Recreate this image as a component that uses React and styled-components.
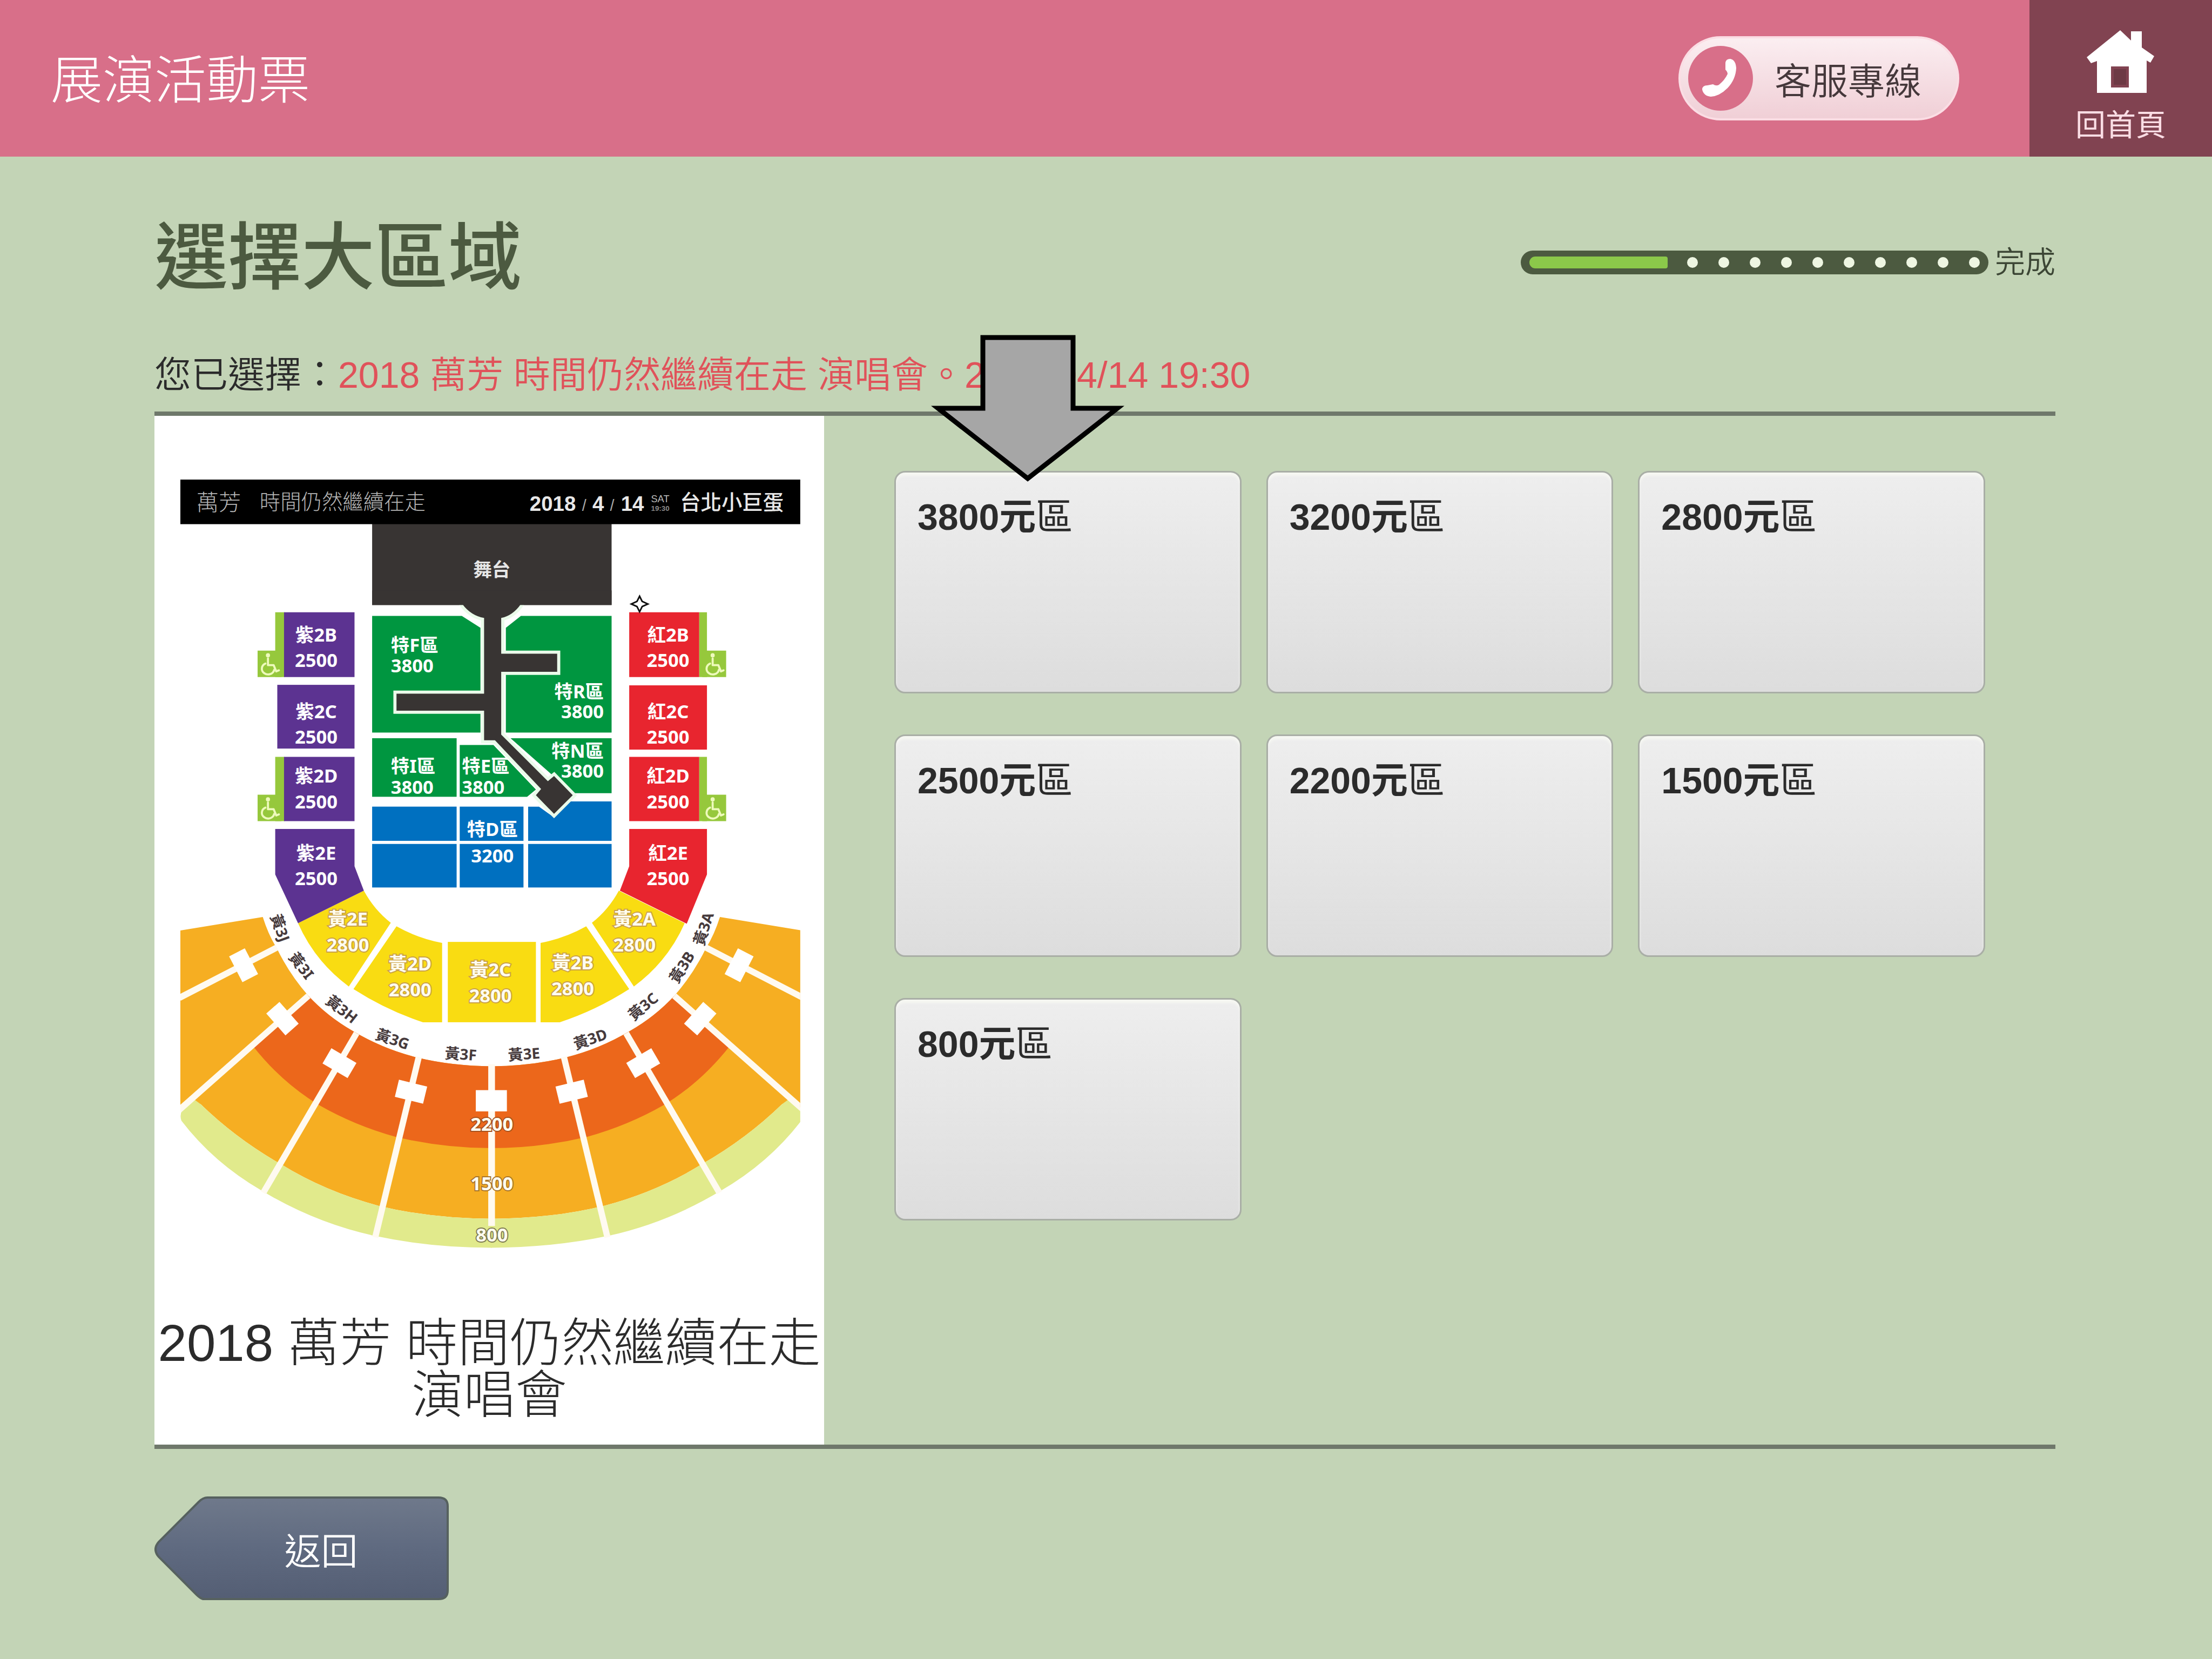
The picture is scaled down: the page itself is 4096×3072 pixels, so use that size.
import React from 'react';
import styled, { createGlobalStyle } from 'styled-components';

const GlobalStyle = createGlobalStyle`
  * {
    box-sizing: border-box;
  }
  body {
    margin: 0;
    background: #c3d4b6;
    color: #2b2b2b;
    font-family: 'Liberation Sans', 'Noto Sans CJK TC', sans-serif;
  }
  h1, h2, p, ul {
    margin: 0;
    padding: 0;
  }
  button {
    font-family: inherit;
    cursor: pointer;
  }
`;

const areas = ['3800', '3200', '2800', '2500', '2200', '1500', '800'];

const steps = Array.from({ length: 10 }, (_, i) => i);

/* ---------- seat map data ---------- */

const sideBlocks = [
  { row: '2B', y: 1239, priceY: 1287 },
  { row: '2C', y: 1386, priceY: 1435 },
  { row: '2D', y: 1511, priceY: 1561 },
  { row: '2E', y: 1659, priceY: 1708 },
];

const floorLabels = [
  { name: '特F區', price: '3800', x: 754, y: 1258, priceY: 1298 },
  { name: '特I區', price: '3800', x: 754, y: 1492, priceY: 1532 },
  { name: '特E區', price: '3800', x: 891, y: 1492, priceY: 1532 },
  { name: '特R區', price: '3800', x: 1165, y: 1348, priceY: 1387, anchor: 'end' },
  { name: '特N區', price: '3800', x: 1165, y: 1463, priceY: 1501, anchor: 'end' },
  { name: '特D區', price: '3200', x: 950, y: 1614, priceY: 1665, anchor: 'middle' },
];

const yellowLabels = [
  { name: '黃2E', x: 671, y: 1787 },
  { name: '黃2D', x: 791, y: 1873 },
  { name: '黃2C', x: 946, y: 1885 },
  { name: '黃2B', x: 1105, y: 1871 },
  { name: '黃2A', x: 1224, y: 1787 },
];

const upperLabels = [
  { name: '黃3J', x: 540, y: 1791, angle: 70 },
  { name: '黃3I', x: 581, y: 1864, angle: 52 },
  { name: '黃3H', x: 659, y: 1948, angle: 38 },
  { name: '黃3G', x: 757, y: 2006, angle: 19 },
  { name: '黃3F', x: 889, y: 2035, angle: 4 },
  { name: '黃3E', x: 1011, y: 2035, angle: -4 },
  { name: '黃3D', x: 1139, y: 2006, angle: -19 },
  { name: '黃3C', x: 1241, y: 1943, angle: -40 },
  { name: '黃3B', x: 1316, y: 1867, angle: -58 },
  { name: '黃3A', x: 1358, y: 1793, angle: -72 },
];

const aisles = [
  { x1: 534, y1: 1829, x2: 346, y2: 1926, cx: 470, cy: 1863 },
  { x1: 595, y1: 1922, x2: 346, y2: 2142, cx: 545, cy: 1966 },
  { x1: 688, y1: 1994, x2: 508, y2: 2302, cx: 655, cy: 2052 },
  { x1: 808, y1: 2040, x2: 724, y2: 2388, cx: 793, cy: 2107 },
];

/* ---------- icons ---------- */

const PhoneIcon = () => (
  <svg width="120" height="120" viewBox="0 0 120 120" aria-hidden="true">
    <circle cx="60" cy="60" r="60" fill="#d86f89" />
    <path
      d="M69 31 Q70 24 78 24 Q88 26 89 41 Q88 62 73 78 Q58 93 42 94 Q29 93 26 81 Q26 73 36 73 L46 71 Q52 75 57 72 Q68 63 73 52 Q73 48 69 44 Z"
      fill="#fff"
    />
  </svg>
);

const HomeIcon = () => (
  <svg width="126" height="116" viewBox="0 0 126 116" aria-hidden="true">
    <path
      d="M62 0 L82 19 V2 H102 V32 L125 48 L118 60 L111 56 V116 H19 V57 L8 61 L0 50 Z M45 67 V106 H78 V67 Z"
      fill="#fff"
      fillRule="evenodd"
    />
    <rect x="50" y="72" width="23" height="29" fill="#6d3a45" />
  </svg>
);

const ArrowDown = () => (
  <svg width="358" height="272" viewBox="0 0 358 272" aria-hidden="true">
    <polygon
      points="96,5 263,5 263,136 345,136 179,266 13,136 96,136"
      fill="#a6a6a6"
      stroke="#000"
      strokeWidth="9"
      strokeMiterlimit="10"
    />
  </svg>
);

const BackShape = () => (
  <svg viewBox="0 0 545 192" preserveAspectRatio="none" aria-hidden="true">
    <defs>
      <linearGradient id="backFill" x1="0" y1="0" x2="0" y2="1">
        <stop offset="0" stopColor="#6f798b" />
        <stop offset="0.5" stopColor="#5f6a80" />
        <stop offset="1" stopColor="#545e74" />
      </linearGradient>
    </defs>
    <path
      d="M98 2 H526 Q543 2 543 18 V174 Q543 190 526 190 H90 Q84 188 78 182 L8 112 Q-4 98 8 84 L82 10 Q90 2 98 2 Z"
      fill="url(#backFill)"
      stroke="#56615f"
      strokeWidth="4"
    />
  </svg>
);

/* ---------- seat map ---------- */

const Wheelchair = ({ x, y }) => (
  <g transform={`translate(${x} ${y})`}>
    <rect width="46" height="51" fill="#96c83c" />
    <g fill="none" stroke="#eefabc" strokeWidth="4" strokeLinecap="round" strokeLinejoin="round">
      <circle cx="20" cy="9" r="2" />
      <path d="M20 15 V28 H31 L36 40 L41 38" />
      <path d="M15 25 A12 11 0 1 0 32 37" />
    </g>
  </g>
);

// one half of the stands, the other half is the same thing mirrored
const HalfStand = () => (
  <g>
    <path
      d="M348 1796 L507 1770 Q518 1805 534 1830 Q558 1880 595 1922 Q632 1962 681 1990 Q740 2025 805 2041 Q870 2057 949 2058 V2352 Q832 2352 730 2327 Q628 2300 542 2247 Q456 2198 387 2131 L348 2138 Z"
      fill="#f6ae22"
    />
    <path
      d="M595 1922 Q632 1962 681 1990 Q740 2025 805 2041 Q870 2057 949 2058 V2216 Q855 2216 763 2194 Q684 2172 616 2133 Q544 2090 488 2019 Z"
      fill="#ec671b"
    />
    <path
      d="M375 2122 L387 2131 Q456 2198 542 2247 Q628 2300 730 2327 Q832 2352 949 2352 V2408 Q830 2408 722 2385 Q608 2360 505 2298 Q412 2244 350 2163 Q346 2152 352 2142 Z"
      fill="#e1ea8c"
    />
    <path d="M702 1719 L575 1782 Q607 1855 673 1904 L754 1781 Q722 1756 702 1719 Z" fill="#f9dc12" />
    <path d="M765 1788 Q806 1811 853 1820 V1973 H816 Q746 1950 682 1909 Z" fill="#f9dc12" />
    {aisles.map((a) => {
      const angle = (Math.atan2(a.y2 - a.y1, a.x2 - a.x1) * 180) / Math.PI;
      return (
        <g key={a.cx} fill="#fffaf0" stroke="#fffaf0">
          <line x1={a.x1} y1={a.y1} x2={a.x2} y2={a.y2} strokeWidth="12" />
          <rect
            x="-17"
            y="-28"
            width="34"
            height="56"
            stroke="none"
            fill="#fff"
            transform={`translate(${a.cx} ${a.cy}) rotate(${angle})`}
          />
        </g>
      );
    })}
  </g>
);

const SeatMap = () => (
  <MapSvg viewBox="298 803 1292 1737" role="img" aria-label="座位圖">
    <defs>
      <clipPath id="mapEdge">
        <rect x="348" y="926" width="1196" height="1500" />
      </clipPath>
    </defs>
    <rect x="718" y="1004" width="462" height="164" fill="#383433" />
    <rect x="348" y="926" width="1196" height="86" fill="#000" />
    <BarText fill="#b5b5b5" fontWeight="300">
      <text x="379" y="985" fontSize="43">萬芳</text>
      <text x="501" y="983" fontSize="40">時間仍然繼續在走</text>
    </BarText>
    <BarText fill="#e8e8e8" fontWeight="bold" fontSize="40">
      <text x="1022" y="986">2018</text>
      <text x="1123" y="986" fontSize="30" fontWeight="normal" fill="#aaa">/</text>
      <text x="1143" y="986">4</text>
      <text x="1177" y="986" fontSize="30" fontWeight="normal" fill="#aaa">/</text>
      <text x="1198" y="986">14</text>
      <text x="1256" y="970" fontSize="19" fontWeight="normal" fill="#bbb">SAT</text>
      <text x="1256" y="986" fontSize="14" fill="#888">19:30</text>
      <text x="1312" y="984" fontWeight="500">台北小巨蛋</text>
    </BarText>

    {/* floor */}
    <g fill="#009640">
      <path d="M718 1189 H891 L927 1212 V1414 H718 Z" />
      <path d="M976 1212 L1005 1189 H1180 V1414 H976 Z" />
      <rect x="718" y="1425" width="163" height="113" />
      <path d="M887 1438 H952 L1034 1524 L1017 1538 H887 Z" />
      <path d="M985 1425 H1180 V1531 H1108 L1070 1500 Z" />
    </g>
    <g fill="#0070c0">
      <rect x="718" y="1557" width="163" height="66" />
      <rect x="887" y="1557" width="123" height="66" />
      <path d="M1019 1557 H1040 L1069 1578 L1096 1547 H1180 V1623 H1019 Z" />
      <rect x="718" y="1629" width="163" height="84" />
      <rect x="887" y="1629" width="123" height="84" />
      <rect x="1019" y="1629" width="161" height="84" />
    </g>
    <path
      d="M892 1166 H1005 Q990 1188 967 1193 V1262 H1075 V1297 H967 V1418 L1057 1508 L1069 1498 L1105 1535 L1069 1571 L1034 1535 L1044 1523 L955 1429 H934 V1372 H765 V1339 H934 V1193 Q908 1188 892 1166 Z"
      fill="#383433"
      stroke="#eafbea"
      strokeWidth="12"
      paintOrder="stroke"
    />
    <rect x="718" y="1140" width="462" height="28" fill="#383433" />
    <text x="949" y="1112" fontSize="36" fontWeight="bold" fill="#e6e6e6" textAnchor="middle">
      舞台
    </text>

    {/* purple and red sides */}
    <g fill="#96c83c">
      <rect x="531" y="1182" width="18" height="125" />
      <rect x="531" y="1461" width="18" height="124" />
      <rect x="1349" y="1182" width="15" height="125" />
      <rect x="1349" y="1461" width="15" height="124" />
    </g>
    <Wheelchair x={497} y={1256} />
    <Wheelchair x={497} y={1534} />
    <Wheelchair x={1355} y={1256} />
    <Wheelchair x={1355} y={1534} />
    <g fill="#5c3391">
      <rect x="548" y="1182" width="136" height="125" />
      <rect x="535" y="1322" width="149" height="123" />
      <rect x="548" y="1461" width="136" height="124" />
    </g>
    <g fill="#e8252f">
      <rect x="1214" y="1182" width="135" height="125" />
      <rect x="1214" y="1323" width="150" height="124" />
      <rect x="1214" y="1461" width="135" height="124" />
    </g>

    <g clipPath="url(#mapEdge)">
      <HalfStand />
      <g transform="translate(1896 0) scale(-1 1)">
        <HalfStand />
      </g>
    </g>
    <rect x="864" y="1818" width="170" height="155" fill="#f9dc12" />
    <rect x="942" y="2054" width="13" height="312" fill="#fffaf0" />
    <rect x="918" y="2104" width="60" height="41" fill="#fff" />
    <path d="M531 1600 H684 V1672 L702 1719 L575 1782 L531 1688 Z" fill="#5c3391" />
    <path d="M1364 1600 H1214 V1672 L1196 1719 L1325 1783 L1364 1688 Z" fill="#e8252f" />

    <path
      d="M1234 1151 L1239 1161 L1250 1166 L1239 1171 L1234 1181 L1229 1171 L1218 1166 L1229 1161 Z"
      fill="#fff"
      stroke="#111"
      strokeWidth="3"
    />

    {/* labels */}
    <g fill="#fff" fontSize="36" fontWeight="bold">
      {sideBlocks.map((b) => (
        <g key={b.row} textAnchor="middle">
          <text x="610" y={b.y}>紫{b.row}</text>
          <text x="610" y={b.priceY}>2500</text>
          <text x="1289" y={b.y}>紅{b.row}</text>
          <text x="1289" y={b.priceY}>2500</text>
        </g>
      ))}
      {floorLabels.map((l) => (
        <g key={l.name} textAnchor={l.anchor || 'start'}>
          <text x={l.x} y={l.y}>{l.name}</text>
          <text x={l.x} y={l.priceY}>{l.price}</text>
        </g>
      ))}
    </g>
    <g
      fill="#fffdf0"
      stroke="#c9a04a"
      strokeWidth="4"
      paintOrder="stroke"
      fontSize="36"
      fontWeight="bold"
      textAnchor="middle"
    >
      {yellowLabels.map((l) => (
        <g key={l.name}>
          <text x={l.x} y={l.y}>{l.name}</text>
          <text x={l.x} y={l.y + 50}>2800</text>
        </g>
      ))}
      <text x="949" y="2183" stroke="#a8521c">2200</text>
      <text x="949" y="2297" stroke="#a8752a">1500</text>
      <text x="949" y="2396" stroke="#7d7a50">800</text>
    </g>
    <g fill="#463a3c" fontSize="29" fontWeight="bold" textAnchor="middle">
      {upperLabels.map((l) => (
        <text key={l.name} y="10" transform={`translate(${l.x} ${l.y}) rotate(${l.angle})`}>
          {l.name}
        </text>
      ))}
    </g>
  </MapSvg>
);

/* ---------- page ---------- */

function App() {
  return (
    <>
      <GlobalStyle />
      <Header>
        <HeaderTitle>展演活動票</HeaderTitle>
        <ServiceButton type="button">
          <PhoneIcon />
          客服專線
        </ServiceButton>
        <HomeLink href="#home">
          <HomeIcon />
          回首頁
        </HomeLink>
      </Header>
      <Main>
        <TitleRow>
          <Title>選擇大區域</Title>
          <Progress>
            <Track role="progressbar" aria-label="進度" aria-valuemin={0} aria-valuemax={100} aria-valuenow={30}>
              <Done />
              <Dots>
                {steps.map((s) => (
                  <Dot key={s} />
                ))}
              </Dots>
            </Track>
            完成
          </Progress>
        </TitleRow>
        <Selected>
          您已選擇：<strong>2018 萬芳 時間仍然繼續在走 演唱會。2018/04/14 19:30</strong>
        </Selected>
        <Content>
          <EventCard>
            <SeatMap />
            <EventName>2018 萬芳 時間仍然繼續在走 演唱會</EventName>
          </EventCard>
          <AreaGrid>
            {areas.map((price, i) => (
              <AreaItem key={price}>
                <AreaButton type="button">
                  {price}元<span>區</span>
                </AreaButton>
                {i === 0 && (
                  <Pointer>
                    <ArrowDown />
                  </Pointer>
                )}
              </AreaItem>
            ))}
          </AreaGrid>
        </Content>
        <BackButton type="button">
          <BackShape />
          <span>返回</span>
        </BackButton>
      </Main>
    </>
  );
}

const Header = styled.header`
  display: flex;
  align-items: center;
  height: 290px;
  padding-left: 94px;
  background: #d86f89;
`;

const HeaderTitle = styled.p`
  flex: 1;
  padding-top: 8px;
  color: #fff;
  font-size: 96px;
  font-weight: 300;
  line-height: 128px;
`;

const ServiceButton = styled.button`
  display: flex;
  align-items: center;
  gap: 40px;
  height: 156px;
  margin-right: 130px;
  padding: 0 66px 0 14px;
  border: 4px solid #fbdde4;
  border-radius: 78px;
  background: linear-gradient(#fbeef1, #f0cfd6);
  color: #45383b;
  font-size: 68px;
  font-weight: 350;
`;

const HomeLink = styled.a`
  display: flex;
  flex-direction: column;
  align-items: center;
  gap: 20px;
  width: 338px;
  height: 100%;
  padding-top: 56px;
  background: #814351;
  color: #fbdde4;
  font-size: 56px;
  line-height: 80px;
  text-decoration: none;
`;

const Main = styled.main`
  padding: 108px 290px 0 286px;
`;

const TitleRow = styled.div`
  display: flex;
  align-items: center;
  justify-content: space-between;
`;

const Title = styled.h1`
  color: #4c5a40;
  font-size: 136px;
  font-weight: 500;
  line-height: 160px;
`;

const Progress = styled.div`
  display: flex;
  align-items: center;
  gap: 12px;
  padding-top: 16px;
  color: #3c4635;
  font-size: 56px;
  font-weight: 350;
  line-height: 64px;
`;

const Track = styled.div`
  display: flex;
  align-items: center;
  gap: 36px;
  width: 866px;
  height: 44px;
  padding: 0 16px;
  border-radius: 22px;
  background: #4c5a40;
`;

const Done = styled.div`
  width: 256px;
  height: 22px;
  border-radius: 11px 4px 4px 11px;
  background: #8bc84a;
`;

const Dots = styled.div`
  display: flex;
  flex: 1;
  justify-content: space-between;
`;

const Dot = styled.i`
  width: 20px;
  height: 20px;
  border-radius: 50%;
  background: #eef6e2;
`;

const Selected = styled.p`
  padding: 96px 0 28px;
  font-size: 68px;
  font-weight: 350;
  line-height: 80px;
  strong {
    color: #e0525a;
    font-weight: inherit;
  }
`;

const Content = styled.section`
  display: flex;
  border-top: 8px solid #6f786b;
  border-bottom: 8px solid #6f786b;
`;

const EventCard = styled.article`
  flex: 0 0 1240px;
  padding-bottom: 44px;
  background: #fff;
`;

const MapSvg = styled.svg`
  display: block;
  width: 100%;
  font-family: 'Noto Sans', 'Noto Sans CJK TC', sans-serif;
`;

const BarText = styled.g`
  font-family: 'Liberation Sans', 'Noto Sans CJK TC', sans-serif;
`;

const EventName = styled.h2`
  padding-top: 2px;
  font-size: 96px;
  font-weight: 300;
  line-height: 96px;
  text-align: center;
`;

const AreaGrid = styled.ul`
  display: grid;
  flex: 1;
  grid-template-columns: repeat(3, 1fr);
  grid-auto-rows: 412px;
  gap: 76px 46px;
  padding: 102px 130px;
  list-style: none;
`;

const AreaItem = styled.li`
  position: relative;
`;

const AreaButton = styled.button`
  display: flex;
  align-items: flex-start;
  width: 100%;
  height: 100%;
  padding: 42px 40px;
  border: 3px solid #a9aea6;
  border-radius: 20px;
  background: linear-gradient(#eeeeee, #dddddd);
  box-shadow: inset 0 6px 4px #f6f7f2;
  color: #2b2b2b;
  font-size: 68px;
  font-weight: bold;
  line-height: 80px;
  span {
    font-weight: 400;
  }
`;

/* points at the area to press first */
const Pointer = styled.div`
  position: absolute;
  bottom: calc(100% - 20px);
  left: 68px;
  svg {
    display: block;
  }
`;

const BackButton = styled.button`
  position: relative;
  width: 545px;
  height: 192px;
  margin-top: 88px;
  padding: 0 0 0 72px;
  border: 0;
  background: none;
  color: #fff;
  font-size: 68px;
  font-weight: 350;
  svg {
    position: absolute;
    inset: 0;
    width: 100%;
    height: 100%;
  }
  span {
    position: relative;
  }
`;

export default App;
